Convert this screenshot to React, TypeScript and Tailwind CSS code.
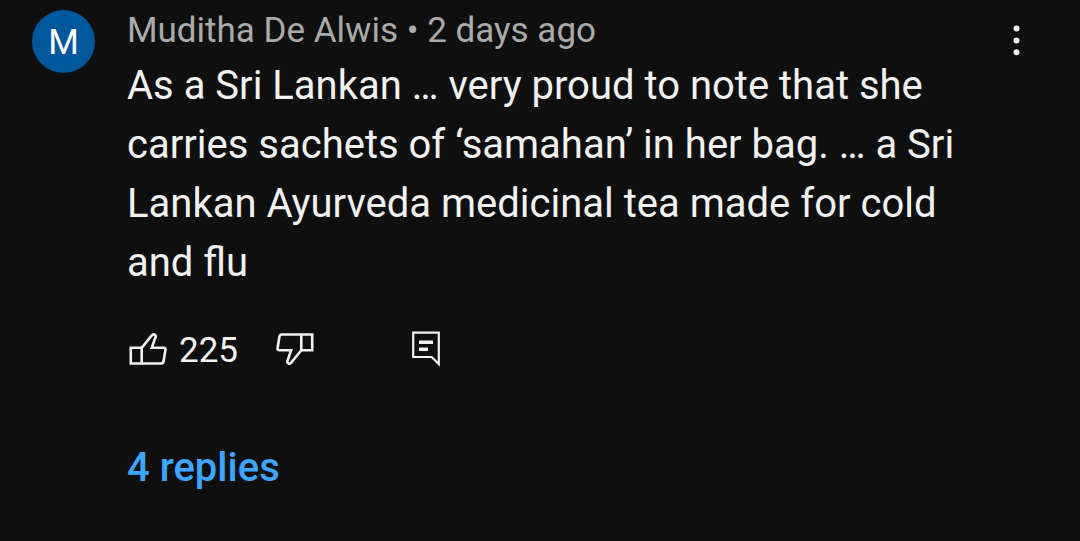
import React from 'react';

const comment = {
  initial: 'M',
  author: 'Muditha De Alwis',
  age: '2 days ago',
  text: 'As a Sri Lankan … very proud to note that she carries sachets of ‘samahan’ in her bag. … a Sri Lankan Ayurveda medicinal tea made for cold and flu',
  likes: 225,
  replies: 4,
};

function ThumbIcon({ className }: { className?: string }) {
  return (
    <svg
      viewBox="0 0 38 34"
      className={`h-[34px] w-[38px] ${className ?? ''}`}
      fill="none"
      stroke="currentColor"
      strokeWidth="2.6"
      aria-hidden="true"
    >
      <path d="M1.8 15.7H12.7V31.5H1.8Z" />
      <path d="M12.7 15.7L22.8 3.4C24.2 1.4 27.2 2.5 26.6 5L22.8 15.7H34.5C36.1 15.7 36.7 16.6 36.4 18L34.6 29.3C34.3 31 33.6 31.5 32 31.5H12.7" />
    </svg>
  );
}

function CommentIcon() {
  return (
    <svg viewBox="0 0 28 36" className="h-9 w-7" fill="none" stroke="currentColor" aria-hidden="true">
      <path d="M1.2 1.6H26.8V33L19.7 26H1.2Z" strokeWidth="2.2" />
      <path d="M7 11.3H21M7 18.2H16" strokeWidth="3.4" />
    </svg>
  );
}

export default function App() {
  return (
    <main className="min-h-screen bg-[#0f0f0f] font-['Roboto',sans-serif] text-[#f1f1f1]">
      <article className="flex items-start px-8">
        <div className="mt-[10px] flex h-[63px] w-[63px] shrink-0 items-center justify-center rounded-full bg-[#01579b] pt-1 text-[35px] text-white">
          {comment.initial}
        </div>

        <div className="ml-8 min-w-0 flex-1 pt-2">
          <header className="text-[35px] leading-[46px] text-[#aaaaaa]">
            {comment.author} • {comment.age}
          </header>
          <p className="mt-0.5 max-w-[850px] text-[40px] leading-[59px]">{comment.text}</p>

          {/* Actions */}
          <div className="mt-8 flex h-[50px] items-center pl-0.5">
            <button type="button" aria-label="Like" className="flex items-center gap-3">
              <ThumbIcon />
              <span className="pt-1 text-[35px] leading-[46px]">{comment.likes}</span>
            </button>
            <button type="button" aria-label="Dislike" className="ml-[38px]">
              <ThumbIcon className="rotate-180" />
            </button>
            <button type="button" aria-label="Reply" className="ml-[98px]">
              <CommentIcon />
            </button>
          </div>

          <button type="button" className="mt-16 block text-[40px] leading-[59px] font-medium text-[#3ea6ff]">
            {comment.replies} replies
          </button>
        </div>

        <button type="button" aria-label="More options" className="mt-6 flex w-16 justify-center">
          <svg viewBox="0 0 8 32" className="h-8 w-2" fill="currentColor" aria-hidden="true">
            <circle cx="4.5" cy="4.5" r="3" />
            <circle cx="4.5" cy="16.5" r="3" />
            <circle cx="4.5" cy="28.3" r="3" />
          </svg>
        </button>
      </article>
    </main>
  );
}
